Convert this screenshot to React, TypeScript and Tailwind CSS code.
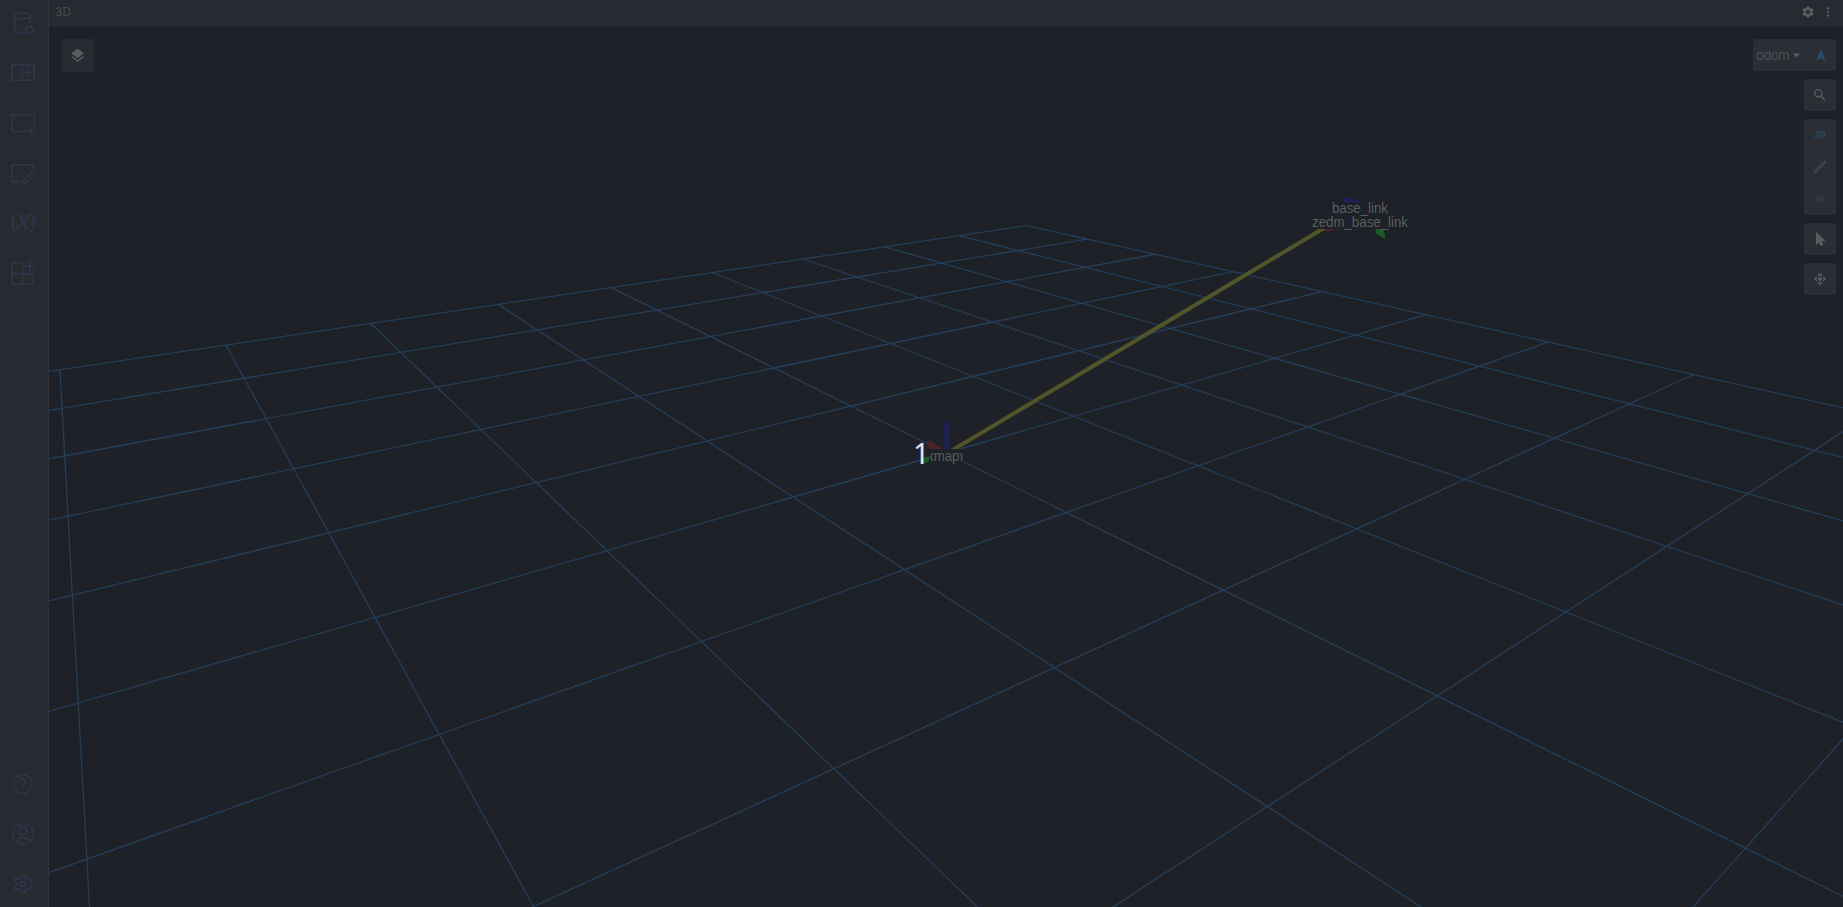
import React from "react";
import { MdArrowDropDown, MdLayers, MdMoreVert, MdSearch, MdSettings } from "react-icons/md";

// Perspective projection of the ground grid; (0,0) is the far corner.
function project(u: number, v: number): [number, number] {
  const w = 1 - 0.0441 * u - 0.0576 * v;
  return [(1026.8 - 110.07 * u - 2.3 * v) / w, (225.6 - 0.288 * u - 0.3 * v) / w];
}

const DIVISIONS = 10;
const NEAR = 0.05;

function gridLines() {
  const lines: { from: [number, number]; to: [number, number] }[] = [];
  for (let i = 0; i <= DIVISIONS; i++) {
    const vMax = Math.min(DIVISIONS, (1 - 0.0441 * i - NEAR) / 0.0576);
    const uMax = Math.min(DIVISIONS, (1 - 0.0576 * i - NEAR) / 0.0441);
    lines.push({ from: project(i, 0), to: project(i, vMax) });
    lines.push({ from: project(0, i), to: project(uMax, i) });
  }
  return lines;
}

function SideIcon({ children }: { children: React.ReactNode }) {
  return (
    <button className="block h-[50px] w-12 shrink-0">
      <svg width="48" height="50" viewBox="0 0 48 50" fill="none" stroke="#32344a" strokeWidth="1.6">
        {children}
      </svg>
    </button>
  );
}

function Sidebar() {
  return (
    <nav className="flex h-full w-[49px] shrink-0 flex-col justify-between overflow-hidden border-r border-[#30333b] bg-[#272a31]">
      <div className="-mt-0.5 flex flex-col">
        <SideIcon>
          <ellipse cx="22.3" cy="18" rx="7.8" ry="3" />
          <path d="M14.5 18v14.2c0 1.8 3.5 3.2 9.2 3.3M30.1 18v7" />
          <circle cx="29.8" cy="32" r="3.5" />
          <circle cx="29.8" cy="32" r="4.7" strokeDasharray="1.6 2.09" strokeWidth="1.6" />
        </SideIcon>
        <SideIcon>
          <path d="M11.7 16.7h22.6v15.6H11.7zM22.3 16.7v15.6M22.3 24.4h12M28.5 16.7v15.6" />
        </SideIcon>
        <SideIcon>
          <path d="M26.5 33.5H11.7V16.7h22.6v11.5M31 28.8v8M27 32.9h8" />
        </SideIcon>
        <SideIcon>
          <path d="M20.5 33.6H11.7V16.7h21.6v4" />
          <path d="M22 36.3l.9-3.8 8.4-8.2q1.5-1 2.7.2 1 1.4-.2 2.6l-8.3 8.2z" strokeWidth="1.4" />
        </SideIcon>
        <SideIcon>
          <g fill="#32344a" stroke="#32344a" strokeWidth=".3" className="font-['Liberation_Serif',serif]">
            <text x="10.2" y="29.8" fontSize="22">(</text>
            <text x="16.6" y="31" fontSize="30" fontStyle="italic">x</text>
            <text x="28.8" y="29.8" fontSize="22">)</text>
          </g>
        </SideIcon>
        <SideIcon>
          <path d="M11.7 14.7h10.8v21.6H11.7zM11.7 25.6h21.6v10.7H22.5M29.7 13v11M24.3 18.4h10.9" />
        </SideIcon>
      </div>
      <div className="-mb-0.5 flex flex-col">
        <SideIcon>
          <circle cx="23" cy="25" r="9.3" strokeWidth="1.4" />
          <path d="M20.2 22.8q0-2.9 2.8-2.9t2.8 2.6c0 2.2-2.8 2.2-2.8 4.7M23 29.2v1.6" />
        </SideIcon>
        <SideIcon>
          <circle cx="23" cy="25" r="10.2" strokeWidth="1.4" />
          <rect x="19.4" y="18.5" width="7.2" height="7" rx="1.3" />
          <path d="M16.3 32.4q1.2-3.4 4.2-3.4h5q3 0 4.2 3.4" />
        </SideIcon>
        <SideIcon>
          <g transform="translate(11.3 14.3) scale(.975)">
            <path d="M10.3 1.5h3.4l.6 3.2 2 1.1 2.9-1 1.7 3-2.3 2.1v2.200l2.300 2.100-1.700 3-2.900-1-2 1.200-.6 3.100h-3.400l-.6-3.100-2-1.200-2.900 1-1.700-3 2.300-2.100V9.900L3.100 7.800l1.700-3 2.900 1 2-1.100z" strokeLinejoin="round" />
            <circle cx="12" cy="11" r="2.6" />
          </g>
        </SideIcon>
      </div>
    </nav>
  );
}

function Scene() {
  return (
    <svg className="absolute inset-0 h-full w-full" viewBox="49 27 1794 880" preserveAspectRatio="xMinYMin slice">
      <g stroke="#253e59" strokeWidth="1.3">
        {gridLines().map(({ from, to }, i) => (
          <line key={i} x1={from[0]} y1={from[1]} x2={to[0]} y2={to[1]} />
        ))}
      </g>
      <path d="M951 451L1325 227.5" stroke="#52552a" strokeWidth="4" />
      <path d="M944.3 450v-21.500h-1.800l4.200-9.500 4.300 9.500h-1.800v21.500z" fill="#1e2158" />
      <path d="M925.500 442l7.500-.8 3 3 7.500 5h-14z" fill="#4c2227" />
      <path d="M920 459l10-3v5l-6 2.500z" fill="#1c5a28" />
      <path d="M1343.500 202v-2l2-2.500h5l3 2.500 7 1v1z" fill="#1e2158" />
      <path d="M1325.500 228h11l-5 3.200-6 .8z" fill="#4c2227" />
      <path d="M1375.500 229h8l2 10.500-9.500-6z" fill="#1c5a28" />
      <rect x="929" y="449" width="35" height="13" fill="#1e2128" />
      <rect x="1331" y="202" width="58" height="13" fill="#1e2128" />
      <rect x="1311" y="215" width="98" height="14" fill="#1e2128" />
      <g fill="#5b5d60" fontSize="14" className="font-['Liberation_Sans',sans-serif]">
        <text x="929.8" y="461" textLength="33.2" lengthAdjust="spacingAndGlyphs">odom</text>
        <rect x="933.5" y="449" width="26" height="16" fill="#1e2128" />
        <text x="933.7" y="461" textLength="25.8" lengthAdjust="spacingAndGlyphs">map</text>
        <text x="1332" y="213" textLength="56" lengthAdjust="spacingAndGlyphs">base_link</text>
        <text x="1312" y="226.500" textLength="96" lengthAdjust="spacingAndGlyphs">zedm_base_link</text>
      </g>
      <text x="913" y="464" fontSize="29" fill="#e4e5e6" className="font-['Noto_Sans',sans-serif]">1</text>
    </svg>
  );
}

function Tool({ children }: { children: React.ReactNode }) {
  return <button className="grid size-8 place-items-center rounded-xs bg-[#2b2e35] text-[#5b5c5f]">{children}</button>;
}

function Toolbar() {
  return (
    <div className="absolute top-3 right-[7px] flex flex-col items-end gap-2">
      <div className="flex h-8 w-[83px] items-center rounded-xs bg-[#2b2e35]">
        <span className="ml-[3px] pt-px text-[13px] tracking-[-0.4px] text-[#4d4f53]">odom</span>
        <MdArrowDropDown className="-ml-px text-[#5b5c5f]" size={18} />
        <span className="ml-auto grid size-8 place-items-center">
          <svg width="12" height="14" viewBox="0 0 12 14">
            <path d="M6 1L11 13 6 10.3 1 13z" fill="#264d69" />
          </svg>
        </span>
      </div>
      <Tool>
        <MdSearch size={16} />
      </Tool>
      <div className="flex flex-col rounded-xs bg-[#2b2e35]">
        <span className="grid size-8 place-items-center pt-0.5 font-['Roboto',sans-serif] text-[9px] font-bold text-[#264d60]">3D</span>
        <span className="grid size-8 place-items-center">
          <svg width="16" height="16" viewBox="0 0 16 16">
            <path d="M1 12.500L12.500 1l2.200 2.200L3.200 14.700z" fill="#404348" />
            <path d="M4 9.500l1.300 1.300M6.200 7.300l1.300 1.300M8.400 5.100l1.300 1.300M10.600 2.900l1.300 1.300" stroke="#2b2e35" />
          </svg>
        </span>
        <span className="grid size-8 place-items-center">
          <svg width="10" height="10" viewBox="0 0 10 10" fill="none" stroke="#3b3e43">
            <circle cx="5" cy="5" r="3.2" strokeWidth="1.2" />
            <circle cx="5" cy="5" r="1.2" fill="#3b3e43" stroke="none" />
          </svg>
        </span>
      </div>
      <Tool>
        <svg width="16" height="16" viewBox="0 0 16 16">
          <path d="M4 .8v13l2.900-2.300 1.800 3.500 2.900-1.300-1.700-3.500 3.600-.5z" fill="currentColor" />
        </svg>
      </Tool>
      <Tool>
        <svg width="14" height="14" viewBox="0 0 14 14" fill="currentColor">
          <circle cx="7" cy="7" r="2" />
          <path d="M4.500 3.600L7 .8l2.500 2.800-.9.700L7 3.300l-1.600 1zM4.500 10.400L7 13.200l2.500-2.800-.9-.7L7 10.700l-1.600-1zM3.600 4.500L.8 7l2.800 2.500.7-.9L3.300 7l1-1.600zM10.400 4.500L13.200 7l-2.800 2.500-.7-.9 1-1.600-1-1.600z" />
        </svg>
      </Tool>
    </div>
  );
}

export default function App() {
  return (
    <div className="flex h-screen w-screen overflow-hidden bg-[#1e2128] font-['Inter',sans-serif]">
      <Sidebar />
      <section className="flex min-w-0 flex-1 flex-col">
        <header className="flex h-[27px] shrink-0 items-center justify-between bg-[#272a31] pr-2 pb-[3px] pl-1.5">
          <h1 className="text-xs text-[#484a4e]">3D</h1>
          <div className="flex items-center gap-1.5 text-[#5b5c5f]">
            <MdSettings size={14} />
            <MdMoreVert size={14} />
          </div>
        </header>
        <main className="relative min-h-0 flex-1 overflow-hidden">
          <Scene />
          <button className="absolute top-3 left-3 grid size-[33px] place-items-center rounded-xs bg-[#272a30] text-[#5b5c5f]">
            <MdLayers size={17} />
          </button>
          <Toolbar />
        </main>
      </section>
    </div>
  );
}
